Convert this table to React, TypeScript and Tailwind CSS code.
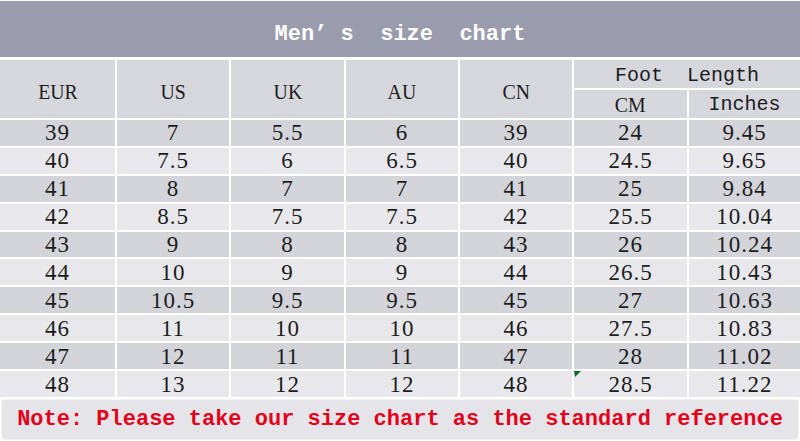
import React from "react";

const rows: string[][] = [
  ["39", "7", "5.5", "6", "39", "24", "9.45"],
  ["40", "7.5", "6", "6.5", "40", "24.5", "9.65"],
  ["41", "8", "7", "7", "41", "25", "9.84"],
  ["42", "8.5", "7.5", "7.5", "42", "25.5", "10.04"],
  ["43", "9", "8", "8", "43", "26", "10.24"],
  ["44", "10", "9", "9", "44", "26.5", "10.43"],
  ["45", "10.5", "9.5", "9.5", "45", "27", "10.63"],
  ["46", "11", "10", "10", "46", "27.5", "10.83"],
  ["47", "12", "11", "11", "47", "28", "11.02"],
  ["48", "13", "12", "12", "48", "28.5", "11.22"],
];

const mono = "font-['Liberation_Mono','Courier_New',monospace]";
const serif = "font-['Liberation_Serif','Times_New_Roman',serif]";

const App = () => {
  return (
    <main className={`w-[800px] h-[441px] bg-white flex flex-col overflow-hidden ${mono}`}>
      <header className="mt-px h-[56px] shrink-0 bg-[#9a9bac] flex items-center justify-center pt-[10px]">
        <h1 className="text-white text-[22px] font-bold whitespace-pre">Men’ s  size  chart</h1>
      </header>

      <section className="mt-[3px] h-[337px] shrink-0 grid grid-cols-[115px_112px_113px_112px_112px_113px_1fr] grid-rows-[28px_28px_repeat(10,minmax(0,1fr))] gap-[2px] text-[20px] leading-[20px] text-[#1c1c1c]">
        {["EUR", "US", "UK", "AU", "CN"].map((h) => (
          <div key={h} className={`row-span-2 bg-[#d6d7dc] flex items-center justify-center pt-[6px] ${serif} text-[22px]`}>
            <span className="inline-block scale-x-90">{h}</span>
          </div>
        ))}
        <div className="col-span-2 bg-[#d6d7dc] flex items-center justify-center whitespace-pre pt-[4px]">Foot  Length</div>
        <div className={`bg-[#d6d7dc] flex items-center justify-center pt-[2px] ${serif} text-[22px]`}>
          <span className="inline-block scale-x-90">CM</span>
        </div>
        <div className="bg-[#d6d7dc] flex items-center justify-center pt-[2px]">Inches</div>

        {rows.map((row, i) =>
          row.map((cell, j) => (
            <div
              key={`${i}-${j}`}
              className={`relative flex items-center justify-center pt-[1px] ${serif} text-[23px] tracking-[1px] ${
                i % 2 === 0 ? "bg-[#d3d4da]" : "bg-[#e8e8ec]"
              }`}
            >
              {cell}
              {i === 9 && j === 5 && (
                <svg className="absolute left-0 top-0" width="8" height="7" viewBox="0 0 8 7">
                  <polygon points="0,0 7,0 1,6" fill="#0b6b22" />
                </svg>
              )}
            </div>
          ))
        )}
      </section>

      <footer className="mt-[2px] mx-[1px] mb-px flex-1 min-h-0 bg-[#e5e5e9] border border-[#f2f2f4] rounded-[3px] flex items-center justify-center">
        <p className="text-[#e4001b] text-[22px] leading-[24px] font-bold whitespace-pre">
          Note: Please take our size chart as the standard reference
        </p>
      </footer>
    </main>
  );
};

export default App;
